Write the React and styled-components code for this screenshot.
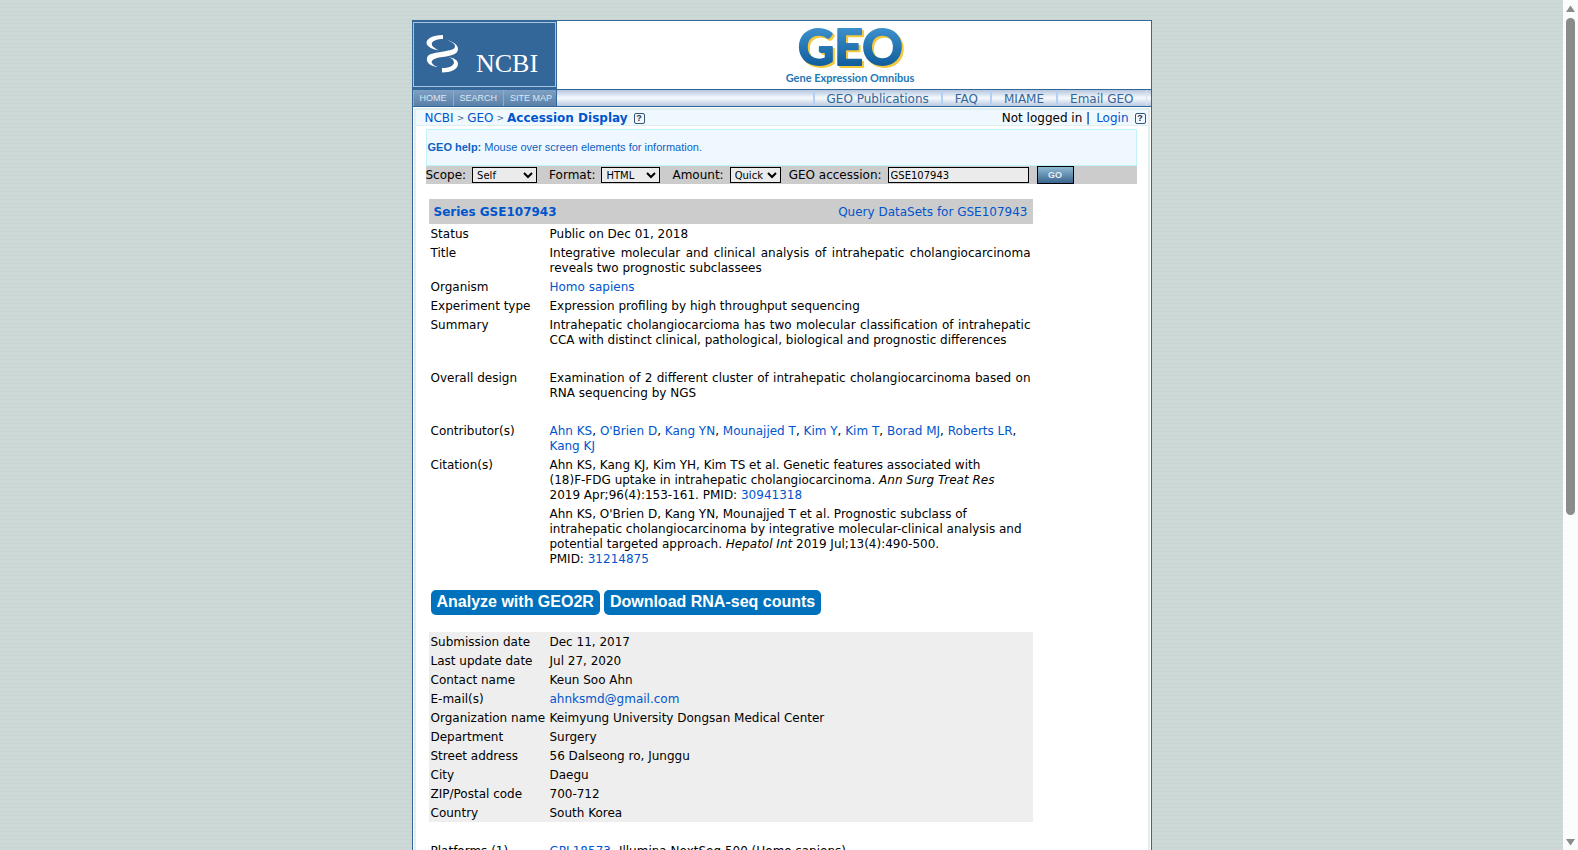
import React from "react";
import styled, { createGlobalStyle } from "styled-components";

const COLORS = {
  navy: "#336699",
  link: "#0055cc",
  ice: "#f0f8ff",
  mist: "#e0eeee",
  silver: "#cccccc",
  smoke: "#eeeeee",
};

const people = [
  "Ahn KS",
  "O'Brien D",
  "Kang YN",
  "Mounajjed T",
  "Kim Y",
  "Kim T",
  "Borad MJ",
  "Roberts LR",
  "Kang KJ",
];

const contact = [
  ["Submission date", "Dec 11, 2017"],
  ["Last update date", "Jul 27, 2020"],
  ["Contact name", "Keun Soo Ahn"],
  ["E-mail(s)", "ahnksmd@gmail.com", true],
  ["Organization name", "Keimyung University Dongsan Medical Center"],
  ["Department", "Surgery"],
  ["Street address", "56 Dalseong ro, Junggu"],
  ["City", "Daegu"],
  ["ZIP/Postal code", "700-712"],
  ["Country", "South Korea"],
];

const NcbiLogo = () => (
  <LogoLink href="#ncbi" aria-label="NCBI">
    <svg width="140" height="63" viewBox="0 0 140 63">
      <g fill="#fff">
        <path d="M29 12 C18 12 12.500 16 12.500 20 C13 24 19 26.500 25 27.500 C19 24.500 17 22 18 20 C19 17.500 24 16 29 16 Z" />
        <path d="M33 17 C40 19 44 22 44 26 C44 32 35 33 25 34.500 C19 36 17 38 18 40 C19 42 21 43 24 44 C17 43.500 12 40 13 35 C14 30 22 30 32 28 C38 27 41 26 41 23 C41 21 38 19 33 17 Z" />
        <path d="M34 34 C40 35 44 37 44 41 C44 46 37 49.500 28 49.500 L28 45 C35 45 39 43 40 40 C40 37 38 35 34 34 Z" />
      </g>
      <text
        x="62"
        y="49"
        fill="#fff"
        fontSize="26"
        fontFamily="'Liberation Serif', serif"
      >
        NCBI
      </text>
    </svg>
  </LogoLink>
);

const GeoLogo = () => (
  <LogoLink href="#geo" aria-label="Gene Expression Omnibus">
    <svg width="142" height="66" viewBox="0 0 142 66">
      <defs>
        <linearGradient id="geoBlue" x1="0" y1="0" x2="0" y2="1">
          <stop offset="0" stopColor="#4a9fdc" />
          <stop offset="1" stopColor="#05508f" />
        </linearGradient>
      </defs>
      <GeoMark x="15" y="43" fill="url(#geoBlue)" stroke="url(#geoBlue)">
        GEO
      </GeoMark>
      <text
        x="67"
        y="60"
        textAnchor="middle"
        fill="#2277b5"
        fontSize="11"
        fontWeight="bold"
        fontFamily="Lato, sans-serif"
      >
        Gene Expression Omnibus
      </text>
    </svg>
  </LogoLink>
);

const Help = () => (
  <HelpButton type="button" aria-label="Help">
    ?
  </HelpButton>
);

const Field = ({ label, children, ...rest }) => (
  <tr>
    <Name scope="row">{label}</Name>
    <Value {...rest}>{children}</Value>
  </tr>
);

export default function App() {
  return (
    <>
      <GlobalStyle />
      <Screen>
        <Backdrop>
          <Page>
            <Header>
              <Brand>
                <NcbiLogo />
              </Brand>
              <Banner>
                <GeoLogo />
              </Banner>
            </Header>
            <NavRow>
              <SmallNav>
                <a href="#home">HOME</a>
                <a href="#search">SEARCH</a>
                <a href="#map">SITE MAP</a>
              </SmallNav>
              <MainNav>
                <a href="#pubs">GEO Publications</a>
                <a href="#faq">FAQ</a>
                <a href="#miame">MIAME</a>
                <a href="#email">Email GEO</a>
              </MainNav>
            </NavRow>
            <Body>
              <Crumbs>
                <CrumbGroup>
                  <Link href="#ncbi">NCBI</Link>
                  <Arrow>&gt;</Arrow>
                  <Link href="#geo">GEO</Link>
                  <Arrow>&gt;</Arrow>
                  <StrongLink href="#acc">Accession Display</StrongLink>
                  <Help />
                </CrumbGroup>
                <LoginGroup>
                  <span>Not logged in |</span>
                  <Link href="#login">Login</Link>
                  <Help />
                </LoginGroup>
              </Crumbs>

              <Content>
                <HelpBox>
                  <b>GEO help:</b> Mouse over screen elements for information.
                </HelpBox>
                <Controls onSubmit={(e) => e.preventDefault()}>
                  <label htmlFor="scope">Scope:</label>
                  <Select id="scope" $width={65}>
                    <option>Self</option>
                    <option>Platform</option>
                    <option>Samples</option>
                    <option>Series</option>
                    <option>Family</option>
                  </Select>
                  <label htmlFor="format">Format:</label>
                  <Select id="format" $width={59}>
                    <option>HTML</option>
                    <option>SOFT</option>
                    <option>MINiML</option>
                  </Select>
                  <label htmlFor="amount">Amount:</label>
                  <Select id="amount" $width={51} $gap={8}>
                    <option>Quick</option>
                    <option>Brief</option>
                    <option>Full</option>
                    <option>Data</option>
                  </Select>
                  <label htmlFor="acc">GEO accession:</label>
                  <AccInput id="acc" defaultValue="GSE107943" />
                  <GoButton type="submit">GO</GoButton>
                </Controls>

                <Record>
                  <TitleBar>
                    <StrongLink href="#series">Series GSE107943</StrongLink>
                    <Link href="#datasets">Query DataSets for GSE107943</Link>
                  </TitleBar>

                  <Table>
                    <tbody>
                      <Field label="Status">Public on Dec 01, 2018</Field>
                      <Field label="Title" $justify>
                        Integrative molecular and clinical analysis of
                        intrahepatic cholangiocarcinoma reveals two prognostic
                        subclassees
                      </Field>
                      <Field label="Organism">
                        <Link href="#taxon">Homo sapiens</Link>
                      </Field>
                      <Field label="Experiment type">
                        Expression profiling by high throughput sequencing
                      </Field>
                      <Field label="Summary" $justify $spaced>
                        Intrahepatic cholangiocarcioma has two molecular
                        classification of intrahepatic CCA with distinct
                        clinical, pathological, biological and prognostic
                        differences
                      </Field>
                      <Field label="Overall design" $justify $spaced>
                        Examination of 2 different cluster of intrahepatic
                        cholangiocarcinoma based on RNA sequencing by NGS
                      </Field>
                      <Field label="Contributor(s)">
                        {people.map((name, i) => (
                          <React.Fragment key={name}>
                            {i > 0 && ", "}
                            <NoWrapLink href="#author">{name}</NoWrapLink>
                          </React.Fragment>
                        ))}
                      </Field>
                      <Field label="Citation(s)">
                        <Citation>
                          Ahn KS, Kang KJ, Kim YH, Kim TS et al. Genetic
                          features associated with <NoWrap>(18)F-FDG</NoWrap>{" "}
                          uptake in intrahepatic cholangiocarcinoma.{" "}
                          <i>Ann Surg Treat Res</i>{" "}
                          <NoWrap>2019 Apr;96(4):153-161.</NoWrap>{" "}
                          PMID:&nbsp;<Link href="#p1">30941318</Link>
                        </Citation>
                        <Citation>
                          Ahn KS, O'Brien D, Kang YN, Mounajjed T et al.
                          Prognostic subclass of intrahepatic cholangiocarcinoma
                          by integrative molecular-clinical analysis and
                          potential targeted approach. <i>Hepatol Int</i> 2019
                          Jul;13(4):490-500. PMID:&nbsp;
                          <Link href="#p2">31214875</Link>
                        </Citation>
                      </Field>
                    </tbody>
                  </Table>

                  <Actions>
                    <ActionButton type="button">Analyze with GEO2R</ActionButton>
                    <ActionButton type="button">
                      Download RNA-seq counts
                    </ActionButton>
                  </Actions>

                  <Table $shaded>
                    <tbody>
                      {contact.map(([label, value, mail]) => (
                        <Field key={label} label={label}>
                          {mail ? (
                            <Link href={`mailto:${value}`}>{value}</Link>
                          ) : (
                            value
                          )}
                        </Field>
                      ))}
                    </tbody>
                  </Table>

                  <Table $after>
                    <tbody>
                      <Field label="Platforms (1)">
                        <PlatformLink href="#gpl">GPL18573</PlatformLink>
                        Illumina NextSeq 500 (Homo sapiens)
                      </Field>
                    </tbody>
                  </Table>
                </Record>
              </Content>
            </Body>
          </Page>
        </Backdrop>
        <Scrollbar aria-hidden="true">
          <svg width="9" height="7" viewBox="0 0 9 7">
            <path d="M4.5 0.5 L9 7 H0 Z" fill="#8b8b8b" />
          </svg>
          <Track>
            <Thumb />
          </Track>
          <svg width="9" height="7" viewBox="0 0 9 7">
            <path d="M4.5 6.5 L9 0 H0 Z" fill="#8b8b8b" />
          </svg>
        </Scrollbar>
      </Screen>
    </>
  );
}

const GlobalStyle = createGlobalStyle`
  * {
    box-sizing: border-box;
  }

  body {
    margin: 0;
    font: 12px/15px Verdana, "DejaVu Sans", sans-serif;
    color: #000;
  }
`;

const Screen = styled.div`
  display: flex;
  height: 100vh;
  overflow: hidden;
`;

const Backdrop = styled.div`
  flex: 1;
  min-width: 0;
  height: 100%;
  overflow: hidden;
  padding-top: 20px;
  background: repeating-linear-gradient(
    #cdd9d6 0,
    #cdd9d6 3px,
    #c7d4d1 3px,
    #c7d4d1 4px
  );
`;

const Page = styled.main`
  width: 100%;
  max-width: 740px;
  margin: 0 auto;
  background: #fff;
  border: solid ${COLORS.navy};
  border-width: 0 1px;
`;

const Header = styled.header`
  display: flex;
  height: 69px;
`;

const Brand = styled.div`
  width: 144px;
  padding-top: 1px;
  border-right: 1px solid ${COLORS.navy};
  background: ${COLORS.navy};

  a {
    border: 1px solid #a9c4dc;
    margin-top: 1px;
  }
`;

const LogoLink = styled.a`
  display: block;
  text-decoration: none;

  svg {
    display: block;
  }
`;

const GeoMark = styled.text`
  font: bold 50px Lato, sans-serif;
  stroke-width: 2px;
  stroke-linejoin: round;
  filter: drop-shadow(2px 2px 0 #f5c93c);
`;

const Banner = styled.div`
  flex: 1;
  display: flex;
  justify-content: center;
  align-items: center;
  border-top: 1px solid ${COLORS.navy};
`;

const NavRow = styled.nav`
  display: flex;
  height: 18px;
  border: solid ${COLORS.navy};
  border-width: 1px 0;
`;

const SmallNav = styled.div`
  display: flex;
  width: 144px;
  border-right: 1px solid ${COLORS.navy};
  background: linear-gradient(#7fa0c4, #5b80a8);

  a {
    padding: 0 6px;
    border-left: 1px solid #8fadca;
    color: #dde8f2;
    font: 9px/16px "Liberation Sans", Arial, sans-serif;
    text-decoration: none;
    white-space: nowrap;
  }
`;

const MainNav = styled.div`
  flex: 1;
  display: flex;
  justify-content: flex-end;
  padding-right: 4px;
  background: linear-gradient(#b4c6de, #f7fafd 50%, #b8c9e0);

  a {
    padding: 0 12px;
    border-left: 2px solid #b3d0f5;
    color: ${COLORS.navy};
    line-height: 18px;
    text-decoration: none;
  }

  a:last-child {
    border-right: 1px solid #dde3ee;
  }
`;

const Body = styled.div`
  margin: 1px 1px 0;
  border: 2px solid ${COLORS.mist};
`;

const Crumbs = styled.div`
  display: flex;
  justify-content: space-between;
  height: 16px;
  padding: 1px 2px 0 9px;
  border-bottom: 1px solid ${COLORS.mist};
  background: ${COLORS.ice};
`;

const CrumbGroup = styled.div`
  display: flex;
  align-items: center;
  gap: 3px;
`;

const LoginGroup = styled(CrumbGroup)`
  gap: 6px;
`;

const Arrow = styled.span`
  color: #446688;
  font-size: 9px;
`;

const HelpButton = styled.button`
  width: 11px;
  height: 11px;
  margin-left: 3px;
  padding: 0;
  border: 1px solid #335577;
  border-radius: 2px;
  background: #f4f8fc;
  color: #223355;
  font: bold 9px/9px "Liberation Sans", Arial, sans-serif;

  ${LoginGroup} & {
    margin-left: 0;
  }
`;

const Link = styled.a`
  color: ${COLORS.link};
  text-decoration: none;
`;

const StrongLink = styled(Link)`
  font-weight: bold;
`;

const NoWrapLink = styled(Link)`
  white-space: nowrap;
`;

const NoWrap = styled.span`
  white-space: nowrap;
`;

const PlatformLink = styled(Link)`
  margin-right: 8px;
`;

const Content = styled.div`
  padding: 3px 11px 0 10px;
`;

const HelpBox = styled.div`
  height: 37px;
  padding-left: 1px;
  border: 1px solid #bff4fb;
  background: ${COLORS.ice};
  color: #0a62c4;
  font: 11px/35px "Liberation Sans", Arial, sans-serif;
`;

const Controls = styled.form`
  display: flex;
  align-items: center;
  height: 18px;
  background: ${COLORS.silver};

  label {
    margin-right: 6px;
    white-space: nowrap;
  }
`;

const Select = styled.select`
  width: ${(p) => p.$width}px;
  height: 16px;
  margin-right: ${(p) => p.$gap || 12}px;
  padding: 0;
  border: 1px solid #000;
  border-radius: 0;
  background-color: #ebebeb;
  color: #000;
  font: 10px Verdana, "DejaVu Sans", sans-serif;
`;

const AccInput = styled.input`
  width: 141px;
  height: 16px;
  padding: 0 2px;
  border: 1px solid #000;
  background: #ebebeb;
  font: 10px Verdana, "DejaVu Sans", sans-serif;
`;

const GoButton = styled.button`
  width: 37px;
  height: 18px;
  margin-left: 8px;
  padding: 0;
  border: 1px solid #000;
  background: linear-gradient(#8fb9d3, #3a668f);
  color: #e4eef6;
  font: bold 9px "Liberation Sans", Arial, sans-serif;
`;

const Record = styled.section`
  max-width: 604px;
  margin: 15px 0 0 3px;
`;

const TitleBar = styled.div`
  display: flex;
  justify-content: space-between;
  padding: 6px 5px 4px;
  background: ${COLORS.silver};
`;

const Table = styled.table`
  width: 100%;
  margin-top: ${(p) => (p.$after ? "19px" : 0)};
  border-collapse: collapse;
  background: ${(p) => (p.$shaded ? COLORS.smoke : "none")};
`;

const Name = styled.th`
  width: 119px;
  padding: 3px 2px 1px;
  font-weight: normal;
  text-align: left;
  vertical-align: top;
  white-space: nowrap;
`;

const Value = styled.td`
  padding: 3px 2px ${(p) => (p.$spaced ? 20 : 1)}px;
  text-align: ${(p) => (p.$justify ? "justify" : "left")};
  vertical-align: top;
`;

const Citation = styled.div`
  & + & {
    margin-top: 4px;
  }
`;

const Actions = styled.div`
  display: flex;
  gap: 4px;
  padding: 22px 2px 17px;
`;

const ActionButton = styled.button`
  height: 25px;
  padding: 0 6px 2px;
  border: 0;
  border-radius: 5px;
  background: #0071bc;
  color: #fff;
  font: bold 16px "Liberation Sans", Arial, sans-serif;
  white-space: nowrap;
`;

const Scrollbar = styled.div`
  display: flex;
  flex-direction: column;
  align-items: center;
  width: 15px;
  padding: 5px 0 4px;
  background: #fcfcfc;
`;

const Track = styled.div`
  flex: 1;
  padding: 6px 0;
`;

const Thumb = styled.div`
  width: 9px;
  height: 61%;
  border-radius: 5px;
  background: #8b8b8b;
`;
